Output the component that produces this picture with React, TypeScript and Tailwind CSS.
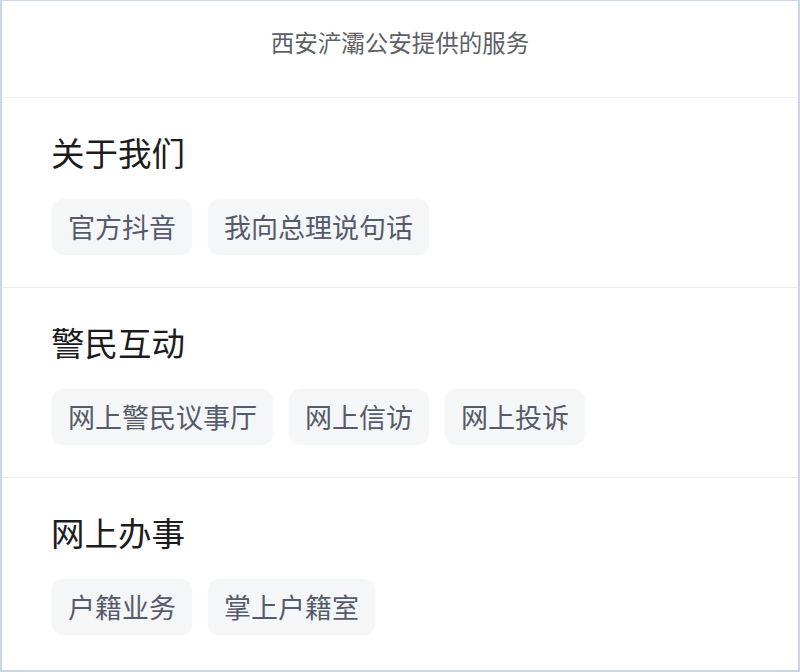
const sections = [
  { title: "关于我们", items: ["官方抖音", "我向总理说句话"] },
  { title: "警民互动", items: ["网上警民议事厅", "网上信访", "网上投诉"] },
  { title: "网上办事", items: ["户籍业务", "掌上户籍室"] },
];

export default function App() {
  return (
    <div
      className="w-[800px] h-[672px] bg-white border-2 border-t border-[#cbd6e3] flex flex-col overflow-hidden"
      style={{ fontFamily: '"Noto Sans CJK SC", "Noto Sans", sans-serif' }}
    >
      {/* Header */}
      <div className="h-[97px] flex items-center justify-center border-b border-[#ebedf0] pb-[12px]">
        <span className="text-[23.5px] text-[#5c5f66]">西安浐灞公安提供的服务</span>
      </div>

      {sections.map((s, i) => (
        <div
          key={s.title}
          className={
            "h-[190px] pl-[49px] pt-[34px] " +
            (i < sections.length - 1 ? "border-b border-[#ebedf0]" : "")
          }
        >
          <h2 className="text-[33.5px] leading-[40px] text-[#1c1c1e]">{s.title}</h2>
          <div className="flex gap-[16px] mt-[27px] pl-[1px]">
            {s.items.map((it) => (
              <div
                key={it}
                className="h-[56px] px-4 flex items-center rounded-[12px] bg-[#f5f6f8] shadow-[0_0_3px_rgba(0,0,0,0.03)] text-[27px] text-[#555b6b]"
              >
                {it}
              </div>
            ))}
          </div>
        </div>
      ))}
    </div>
  );
}
